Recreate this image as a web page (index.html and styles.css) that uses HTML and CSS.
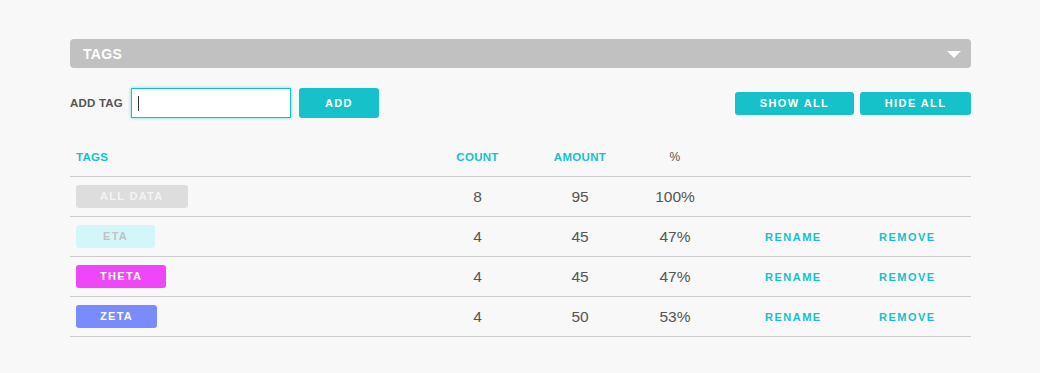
FILE: index.html
```html
<!DOCTYPE html>
<html>
<head>
<meta charset="utf-8">
<link rel="stylesheet" href="styles.css">
</head>
<body>
<div class="page">
  <div class="panel-head">
    <span class="panel-title">TAGS</span>
    <svg class="caret-down" width="14" height="7" viewBox="0 0 14 7"><path d="M0 0 H14 L7 7 Z" fill="#fff"/></svg>
  </div>

  <div class="toolbar">
    <div class="add-group">
      <span class="add-label">ADD TAG</span>
      <div class="input-box"><span class="text-caret"></span></div>
      <button class="btn btn-add">ADD</button>
    </div>
    <div class="view-group">
      <button class="btn btn-small btn-show">SHOW ALL</button>
      <button class="btn btn-small btn-hide">HIDE ALL</button>
    </div>
  </div>

  <div class="table">
    <div class="row head">
      <div class="cell c-tag th-teal">TAGS</div>
      <div class="cell c-num th-teal">COUNT</div>
      <div class="cell c-num th-teal">AMOUNT</div>
      <div class="cell c-num th-gray">%</div>
      <div class="cell"></div>
      <div class="cell"></div>
    </div>
    <div class="row">
      <div class="cell c-tag"><span class="pill pill-all">ALL DATA</span></div>
      <div class="cell c-num val">8</div>
      <div class="cell c-num val">95</div>
      <div class="cell c-num val">100%</div>
      <div class="cell"></div>
      <div class="cell"></div>
    </div>
    <div class="row">
      <div class="cell c-tag"><span class="pill pill-eta">ETA</span></div>
      <div class="cell c-num val">4</div>
      <div class="cell c-num val">45</div>
      <div class="cell c-num val">47%</div>
      <div class="cell c-rename"><span class="link">RENAME</span></div>
      <div class="cell c-remove"><span class="link">REMOVE</span></div>
    </div>
    <div class="row">
      <div class="cell c-tag"><span class="pill pill-theta">THETA</span></div>
      <div class="cell c-num val">4</div>
      <div class="cell c-num val">45</div>
      <div class="cell c-num val">47%</div>
      <div class="cell c-rename"><span class="link">RENAME</span></div>
      <div class="cell c-remove"><span class="link">REMOVE</span></div>
    </div>
    <div class="row">
      <div class="cell c-tag"><span class="pill pill-zeta">ZETA</span></div>
      <div class="cell c-num val">4</div>
      <div class="cell c-num val">50</div>
      <div class="cell c-num val">53%</div>
      <div class="cell c-rename"><span class="link">RENAME</span></div>
      <div class="cell c-remove"><span class="link">REMOVE</span></div>
    </div>
  </div>
</div>
</body>
</html>
```

FILE: styles.css
```css
html, body {
  margin: 0;
  padding: 0;
  background: #f8f8f8;
  font-family: "Liberation Sans", Arial, sans-serif;
  color: #555;
}

.page {
  width: 901px;
  padding: 39px 0 0 70px;
}

.panel-head {
  height: 29px;
  background: #c1c1c1;
  border-radius: 4px;
  display: flex;
  align-items: center;
  justify-content: space-between;
  padding: 0 10px 0 13px;
}

.panel-title {
  color: #fff;
  font-weight: bold;
  font-size: 14px;
  letter-spacing: 0.3px;
}

.caret-down {
  display: block;
  margin-top: 1px;
}

.toolbar {
  margin-top: 20px;
  display: flex;
  align-items: center;
  justify-content: space-between;
}

.add-group {
  display: flex;
  align-items: center;
}

.add-label {
  font-size: 11.5px;
  font-weight: bold;
  letter-spacing: 0.2px;
  color: #555;
  margin-right: 8px;
}

.input-box {
  box-sizing: border-box;
  width: 160px;
  height: 30px;
  background: #fff;
  border: 1px solid #17c1c9;
  box-shadow: 0 0 3px rgba(23, 193, 201, 0.6);
  display: flex;
  align-items: center;
  padding-left: 6px;
  margin-right: 8px;
}

.text-caret {
  display: block;
  width: 1px;
  height: 15px;
  background: #333;
}

.btn {
  border: none;
  background: #16c1c9;
  color: #fff;
  font-family: "Liberation Sans", Arial, sans-serif;
  font-weight: bold;
  font-size: 11px;
  letter-spacing: 1.4px;
  border-radius: 3px;
  padding: 0;
  margin: 0;
}

.btn-add {
  width: 80px;
  height: 30px;
}

.view-group {
  display: flex;
  gap: 6px;
}

.btn-small {
  height: 23px;
}

.btn-show { width: 119px; }
.btn-hide { width: 111px; }

.table {
  margin-top: 19px;
}

.row {
  box-sizing: border-box;
  display: grid;
  grid-template-columns: 360px 95px 110px 80px 135px 121px;
  height: 40px;
  border-bottom: 1px solid #cbcbcb;
  align-items: center;
}

.cell {
  display: flex;
  align-items: center;
}

.c-tag {
  padding-left: 6px;
}

.c-num {
  justify-content: center;
}

.th-teal, .th-gray {
  font-size: 11.5px;
  font-weight: bold;
  letter-spacing: 0.3px;
}

.th-teal { color: #16c1c9; }
.th-gray { color: #555; font-weight: normal; font-size: 12px; }

.val {
  font-size: 15.5px;
  color: #555;
}

.pill {
  display: inline-block;
  height: 23px;
  line-height: 23px;
  padding: 0 24px;
  border-radius: 3px;
  font-size: 11px;
  font-weight: bold;
  letter-spacing: 1.3px;
  color: #fff;
}

.pill-all { background: #dddddd; color: #f3f3f3; }
.pill-eta { background: #d3f7f8; color: #c2c2c2; padding: 0 27px; }
.pill-theta { background: #ef46fa; }
.pill-zeta { background: #7a8cfb; }

.c-rename { padding-left: 50px; }
.c-remove { padding-left: 29px; }

.link {
  color: #16c1c9;
  font-size: 11px;
  font-weight: bold;
  letter-spacing: 1.5px;
}
```
